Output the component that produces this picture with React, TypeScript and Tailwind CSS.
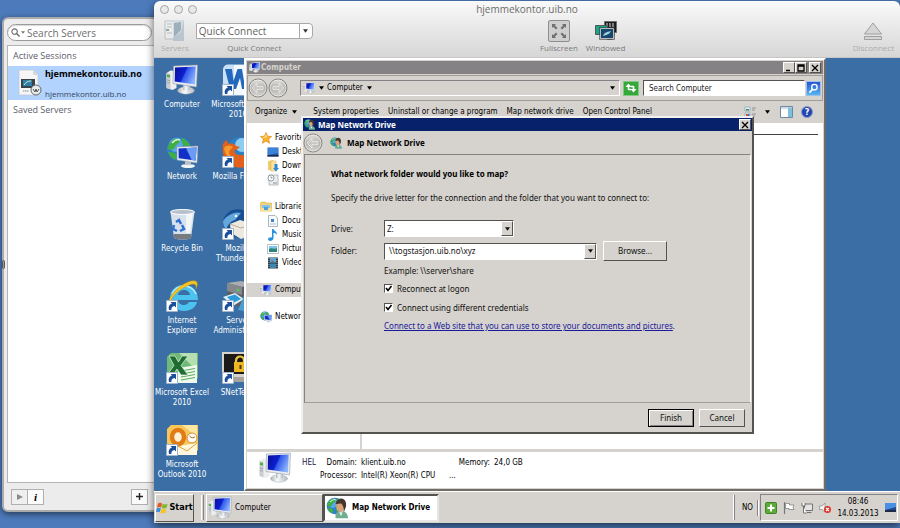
import { useState } from "react";
import type { ReactNode } from "react";

const RAISED = "border border-t-white border-l-white border-r-[#55534f] border-b-[#55534f] bg-[#d6d3ce]";
const SUNKEN = "border border-t-[#55534f] border-l-[#55534f] border-r-white border-b-white";
const MAC = "font-['Open_Sans','Noto_Sans',sans-serif]";
const TAHOMA = "font-['DejaVu_Sans_Condensed','DejaVu_Sans',sans-serif]";
const SEGOE = "font-['Noto_Sans','Open_Sans',sans-serif]";

function Caret({ className = "" }: { className?: string }) {
  return (
    <svg viewBox="0 0 6 4" className={`w-[5px] h-[4px] shrink-0 ${className}`} aria-hidden="true">
      <path d="M0 0h6L3 4z" fill="currentColor" />
    </svg>
  );
}

/* ---------- icons ---------- */

function PcIcon({ className = "w-8 h-8" }: { className?: string }) {
  return (
    <svg viewBox="0 0 32 32" className={`shrink-0 ${className}`} aria-hidden="true">
      <defs>
        <linearGradient id="pcScreen" x1="0" y1="0.2" x2="1" y2="0.6">
          <stop offset="0" stopColor="#0a12a0" />
          <stop offset="0.45" stopColor="#0d1fd0" />
          <stop offset="0.5" stopColor="#2f57ea" />
          <stop offset="1" stopColor="#8fb6ff" />
        </linearGradient>
        <linearGradient id="pcBase" x1="0" y1="0" x2="1" y2="0">
          <stop offset="0" stopColor="#aeb4ba" />
          <stop offset="0.4" stopColor="#fafbfc" />
          <stop offset="1" stopColor="#b4bac0" />
        </linearGradient>
      </defs>
      <path d="M0.500 9l4-2.500 6 .5v17l-4 2-6-2z" fill="#eceef0" />
      <path d="M0.500 9l4 .8V25.500l-4-1.500z" fill="#c9ced3" />
      <path d="M1 10.500l3 .6v2.400l-3-.6z" fill="#4fae3e" />
      <path d="M1 16l3 .6M1 18.500l3 .6" stroke="#8b9299" strokeWidth="0.7" />
      <ellipse cx="20" cy="26.500" rx="8.500" ry="3.700" fill="url(#pcBase)" stroke="#98a0a8" strokeWidth="0.4" />
      <path d="M17 19h7v7c-2 1-5 1-7 0z" fill="url(#pcBase)" />
      <path d="M7.500 2L31.500 1l-1 22L7 19.500z" fill="#e9edf1" stroke="#929ba4" strokeWidth="0.6" />
      <path d="M9 3.500L29.700 2.600 29 20.500 8.700 17.500z" fill="url(#pcScreen)" />
    </svg>
  );
}

function Globe() {
  return (
    <>
      <circle cx="13" cy="13" r="12" fill="#2f7fd0" />
      <circle cx="10" cy="9" r="7" fill="#6db9f0" opacity="0.7" />
      <path d="M3 8c3-5 7-6 9-5l2 3-4 3-2 4-4 1-3-1zM15 2c5 1 8 4 9 8l-4 1-3-2-1-3zM4 16l5 1 2 3-2 4c-4-2-6-5-7-8zM14 13l6-1 4 3c-1 5-4 7-7 9l-2-5z" fill="#3fae45" />
      <path d="M6 7c3-3 6-4 8-3" stroke="#d9f5d0" strokeWidth="1.500" fill="none" />
    </>
  );
}

function NetworkIcon({ className = "w-8 h-8" }: { className?: string }) {
  return (
    <svg viewBox="0 0 32 32" className={`shrink-0 ${className}`} aria-hidden="true">
      <Globe />
      <ellipse cx="22" cy="30" rx="7" ry="2" fill="#f0f3f6" />
      <path d="M19 25h6v4h-6z" fill="#bcc3ca" />
      <path d="M11 11l21-1-1 17-20-3z" fill="#e8ecf0" stroke="#929ba4" strokeWidth="0.5" />
      <path d="M12.500 12.500l18-.9-.8 13-17-2.400z" fill="#1230c8" />
      <path d="M20 12.200l10.500-.6-.8 13-4-.5z" fill="#6b9cf5" />
    </svg>
  );
}

function DriveUserIcon({ className = "w-6 h-6" }: { className?: string }) {
  return (
    <svg viewBox="0 0 32 32" className={`shrink-0 ${className}`} aria-hidden="true">
      <Globe />
      <path d="M14 31c0-3-1-5 1-8l5-2h6c4 1 6 5 6 10z" fill="#6fae90" />
      <path d="M19 22l3 6 2-6z" fill="#eef3ef" />
      <ellipse cx="20.500" cy="14" rx="5.500" ry="8" fill="#d9a27b" />
      <path d="M14 10c1-6 5-8 9-8 5 1 7 5 6 12l-3 8c-1-3 0-6-1-8-1-3-2-4-4-5-2 1-4 1-7 1z" fill="#47352c" />
    </svg>
  );
}

function ShortcutArrow() {
  return (
    <g>
      <path d="M0.500 20.500h11v11H0.500z" fill="#fff" stroke="#9db4cc" />
      <path d="M3 30c-1-4 1-6 3-6.500L4.500 22H10v5.500L8.500 26C6 26.500 5 28 5.500 30z" fill="#1c4f9c" />
    </g>
  );
}

function WordIcon() {
  return (
    <svg viewBox="0 0 32 32" className="w-8 h-8" aria-hidden="true">
      <rect x="1" y="0.500" width="31" height="31" rx="5" fill="#c9e0f7" />
      <path d="M12 1h18v30H12z" fill="#f4f9fe" />
      <path d="M3 5h7l1.500 12L15.500 5h4.500l2 12L25 5h6l-6 20h-5l-2-11-4 11H8z" fill="#2468bd" />
      <ShortcutArrow />
    </svg>
  );
}

function FirefoxIcon() {
  return (
    <svg viewBox="0 0 32 32" className="w-8 h-8" aria-hidden="true">
      <circle cx="18" cy="14" r="13" fill="#2e7fc4" />
      <circle cx="20" cy="9" r="7" fill="#8ecdf2" />
      <path d="M1 8l3-4 3 4c4-1 6 0 7 2l4 1-4 3c-2 0-2 1-1 3 3 3 8 3 11 0l4-2c-1 5 0 8 4 3v5c-3 8-12 10-19 8C5 29-1 21 1 8z" fill="#e2601c" />
      <path d="M2 12c2-3 6-3 9-1l-3 3c-2 3 0 7 5 8-5 1-10-2-11-10z" fill="#f59a2c" />
      <ShortcutArrow />
    </svg>
  );
}

function RecycleIcon() {
  return (
    <svg viewBox="0 0 32 32" className="w-8 h-8" aria-hidden="true">
      <path d="M4.500 4h24l-3.500 26c-3 2-14 2-17 0z" fill="#dfe6ee" opacity="0.95" />
      <path d="M7.500 26h18l-.5 4c-3 2-14 2-17 0z" fill="#777b80" />
      <path d="M20 5h7l-3 20h-4z" fill="#fff" opacity="0.7" />
      <ellipse cx="16.500" cy="4" rx="12" ry="2.500" fill="#b6c1cc" stroke="#fff" />
      <path d="M10 14l3-2 2 4M16 17l2 4-4 2M8 17l-1 4 4 2" stroke="#2d6fd2" strokeWidth="2.500" fill="none" />
    </svg>
  );
}

function ThunderbirdIcon() {
  return (
    <svg viewBox="0 0 32 32" className="w-8 h-8" aria-hidden="true">
      <path d="M1 13C3 4 12-1 21 2c7 2 11 8 11 15-1 9-8 14-16 13C6 28 1 22 1 13z" fill="#184f92" />
      <path d="M1 13c4-6 12-10 18-8l-6 7c-4 1-7 4-9 10-2-3-3-6-3-9z" fill="#63a8dd" />
      <path d="M8 16l10-4 13 4-4 12-8 3-10-6z" fill="#eee9e0" />
      <path d="M8 16l11 4 12-4" stroke="#b9ab94" fill="none" />
      <circle cx="14" cy="8" r="1.300" fill="#fff" />
      <ShortcutArrow />
    </svg>
  );
}

function ExplorerIcon() {
  return (
    <svg viewBox="0 0 32 32" className="w-8 h-8" aria-hidden="true">
      <path fillRule="evenodd" d="M18 5C9 5 4 11 4 18s6 13 14 13c7 0 12-4 13-9h-8c-1 2-3 3-5 3-3 0-6-2-6-5h20C32 11 27 5 18 5zm-6 10c0-3 3-5 6-5s6 2 6 5z" fill="#4cc3ee" />
      <path d="M6 14c2-5 7-8 12-8s10 3 12 8" stroke="#bdecfb" strokeWidth="1.500" fill="none" />
      <path d="M3 24C1 18 12 6 22 2c9-3 11 0 8 7 1-6-3-6-9-3C12 10 5 17 4 24z" fill="#f6c51f" stroke="#c99410" strokeWidth="0.5" />
      <ShortcutArrow />
    </svg>
  );
}

function ServerAdminIcon() {
  return (
    <svg viewBox="0 0 32 32" className="w-8 h-8" aria-hidden="true">
      <path d="M5 3l14-2 13 3v20l-12 4L5 22z" fill="#5b5e62" />
      <path d="M5 3l14-2 13 3-12 3z" fill="#a9adb2" />
      <path d="M5 3l15 4v8L5 11z" fill="#85898e" />
      <circle cx="16" cy="10" r="1.300" fill="#4fd34f" />
      <path d="M1 17l12-4 9 6-11 7z" fill="#dfeffa" />
      <path d="M5 17l8-2.500 6 4.500-8 4z" fill="#2c9bd8" />
      <path d="M16 30l6-14 4 2-4 13z" fill="#4a9fd0" />
      <ShortcutArrow />
    </svg>
  );
}

function ExcelIcon() {
  return (
    <svg viewBox="0 0 32 32" className="w-8 h-8" aria-hidden="true">
      <path d="M1 5l4-4h27v25l-5 5H1z" fill="#6fb978" />
      <path d="M13 1h18v18z" fill="#b5dfb1" />
      <path d="M12 16l19-3v18H12z" fill="#eef8ec" />
      <path d="M15 19l14-2.500M15 22l14-2.500M15 25l14-2.500M15 28l14-2.500" stroke="#5dac61" strokeWidth="1.200" />
      <path d="M3 4h6l3.500 6L16 4h6l-7 9.500 7 9.500h-7l-4-6-4 6H1l7-9.500z" fill="#1d6d33" stroke="#e2f2de" strokeWidth="0.7" />
      <ShortcutArrow />
    </svg>
  );
}

function SNetIcon() {
  return (
    <svg viewBox="0 0 32 32" className="w-8 h-8" aria-hidden="true">
      <path d="M0 0h32v25H0z" fill="#d5d4cf" />
      <path d="M2 2h29v20H2z" fill="#1b1a18" />
      <path d="M14 11V9c0-6 8-6 8 0v2" stroke="#f0c542" strokeWidth="2.200" fill="none" />
      <path d="M12 10h13v10H12z" fill="#eeb822" />
      <path d="M17.500 13h2v4h-2z" fill="#4f3a05" />
      <path d="M12 25h19v5H12z" fill="#a5a39c" />
      <ShortcutArrow />
    </svg>
  );
}

function OutlookIcon() {
  return (
    <svg viewBox="0 0 32 32" className="w-8 h-8" aria-hidden="true">
      <path d="M1 5l4-4h27v25l-5 5H1z" fill="#f6c85a" />
      <path d="M16 1h15v12z" fill="#fbe6a2" />
      <path d="M12 22l19-3v12H12z" fill="#fff8df" />
      <path d="M12 22l9 5 10-8" stroke="#dba03a" fill="none" />
      <ellipse cx="12" cy="13" rx="6" ry="7" fill="#fdf3d4" stroke="#e07b16" strokeWidth="4.500" />
      <circle cx="26" cy="14" r="5" fill="#fff" stroke="#d98a2b" />
      <path d="M23.500 12l2.500 2 3-1" stroke="#bb6a18" fill="none" />
      <ShortcutArrow />
    </svg>
  );
}

function StarIcon() {
  return (
    <svg viewBox="0 0 12 12" className="w-3 h-3 shrink-0" aria-hidden="true">
      <path d="M6 0.500l1.600 3.700 4 .3-3 2.600 1 4.200L6 9.100l-3.600 2.200 1-4.200-3-2.600 4-.3z" fill="#fbb224" stroke="#d97a12" strokeWidth="0.6" />
      <path d="M6 2l1 3-3 1-2-1h2.500z" fill="#ffe28a" />
    </svg>
  );
}

function DesktopIcon() {
  return (
    <svg viewBox="0 0 12 12" className="w-3 h-3 shrink-0" aria-hidden="true">
      <path d="M0.500 1.500h11v9H0.500z" fill="#2258ab" />
      <path d="M1 2h10v5L1 9z" fill="#3b83d8" />
      <path d="M0.500 9h11v1.500H0.500z" fill="#1c2c46" />
    </svg>
  );
}

function DownloadIcon() {
  return (
    <svg viewBox="0 0 12 12" className="w-3 h-3 shrink-0" aria-hidden="true">
      <path d="M1 1l5-1v11l-5-1z" fill="#f0cd6c" />
      <path d="M4 1h5v10H4z" fill="#f8e3a0" stroke="#d4ab48" strokeWidth="0.5" />
      <path d="M7.500 4h3v4H12l-3 3.500L6 8h1.500z" fill="#2d86d6" />
    </svg>
  );
}

function RecentIcon() {
  return (
    <svg viewBox="0 0 12 12" className="w-3 h-3 shrink-0" aria-hidden="true">
      <path d="M2 1h9v10H2z" fill="#e9edf0" stroke="#9aa5ae" strokeWidth="0.7" />
      <circle cx="4" cy="4" r="3" fill="#fff" stroke="#7c8993" strokeWidth="0.8" />
      <path d="M4 2.500V4h1.500M6 9h4" stroke="#6c7780" strokeWidth="0.8" fill="none" />
    </svg>
  );
}

function LibraryIcon() {
  return (
    <svg viewBox="0 0 12 12" className="w-3 h-3 shrink-0" aria-hidden="true">
      <path d="M0.500 2l1-1h4l1 1h5v8h-11z" fill="#f2d377" stroke="#c9a23f" strokeWidth="0.5" />
      <path d="M2 4h8v6H2z" fill="#7fc4ee" />
      <path d="M0.500 7h11v3.500h-11z" fill="#f7e29b" />
      <path d="M4 6h4v3H4z" fill="#4d9ddb" />
    </svg>
  );
}

function DocIcon() {
  return (
    <svg viewBox="0 0 12 12" className="w-3 h-3 shrink-0" aria-hidden="true">
      <path d="M1.500 0.500h6.500l2.500 2.500v8.500h-9z" fill="#f7fafc" stroke="#8c9aa6" strokeWidth="0.7" />
      <path d="M4 4h3v3H4z" fill="#4384c8" />
      <path d="M3 9h6" stroke="#9fb2c2" strokeWidth="0.8" />
    </svg>
  );
}

function MusicIcon() {
  return (
    <svg viewBox="0 0 12 12" className="w-3 h-3 shrink-0" aria-hidden="true">
      <path d="M5 0h1.500c.5 2 4 2.500 3.500 6-.5-1.500-2-2-3.500-2v5c0 3-5 4-5.500 1.500C1 8.500 3.500 8 5 8.500z" fill="#2a92dc" />
    </svg>
  );
}

function PictureIcon() {
  return (
    <svg viewBox="0 0 12 12" className="w-3 h-3 shrink-0" aria-hidden="true">
      <path d="M0.500 1.500h11v9h-11z" fill="#fff" stroke="#97a3ad" strokeWidth="0.7" />
      <path d="M2 3h8v3H2z" fill="#7cc6f0" />
      <path d="M2 6c3-2 5 1 8-1v4H2z" fill="#2b8678" />
    </svg>
  );
}

function VideoIcon() {
  return (
    <svg viewBox="0 0 12 12" className="w-3 h-3 shrink-0" aria-hidden="true">
      <path d="M1 0.500h10v11H1z" fill="#2c3c48" />
      <path d="M3 1h6v4.500H3z" fill="#5aa9d6" />
      <path d="M3 6.500h6V11H3z" fill="#3d86ad" />
      <path d="M2 1v10M10 1v10" stroke="#c9d3da" strokeWidth="0.8" strokeDasharray="1 1" />
      <path d="M4 3l3 1-2 1z" fill="#c5462e" />
    </svg>
  );
}

function RoundArrow({ flip = false }: { flip?: boolean }) {
  return (
    <svg viewBox="0 0 20 20" className={`w-5 h-5 shrink-0 ${flip ? "-scale-x-100" : ""}`} aria-hidden="true">
      <defs>
        <linearGradient id="roundBtn" x1="0" y1="0" x2="0" y2="1">
          <stop offset="0" stopColor="#e4e3e1" />
          <stop offset="0.5" stopColor="#b5b3b0" />
          <stop offset="1" stopColor="#d8d6d3" />
        </linearGradient>
      </defs>
      <circle cx="10" cy="10" r="9" fill="url(#roundBtn)" stroke="#82807c" />
      <circle cx="10" cy="10" r="8" fill="none" stroke="#f0efed" strokeWidth="0.6" />
      <path d="M9 5l-5 5 5 5v-3.500h6v-3H9z" fill="#cbc9c6" stroke="#ecebe9" strokeWidth="0.8" />
    </svg>
  );
}

function ServersIcon() {
  return (
    <svg viewBox="0 0 22 24" className="w-[22px] h-[24px] opacity-70" aria-hidden="true">
      <path d="M1 2h9v18H1z" fill="#eceeee" stroke="#9aa0a3" strokeWidth="0.8" />
      <path d="M3 5h5M3 8h5M3 14h5" stroke="#a5abae" />
      <path d="M2 10h3v2H2z" fill="#6f8b9c" />
      <path d="M9 1h11v21H9z" fill="#a9b9c5" />
      <path d="M9 1h11l-3 12-8 6z" fill="#c9d6de" />
      <path d="M10 4l7-1v8l-7 7z" fill="#5f7d93" opacity="0.7" />
    </svg>
  );
}

function FullscreenIcon() {
  return (
    <svg viewBox="0 0 22 22" className="w-[22px] h-[22px]" aria-hidden="true">
      <rect x="0.500" y="0.500" width="21" height="21" rx="1.500" fill="#cfcfcf" stroke="#8e8e8e" />
      <path d="M4 8V4h4L6.800 5.200 9.500 8 8 9.500 5.200 6.800zM18 8V4h-4l1.200 1.200L12.500 8 14 9.500l2.800-2.700zM4 14v4h4l-1.200-1.200L9.500 14 8 12.500l-2.800 2.700zM18 14v4h-4l1.200-1.200-2.700-2.800 1.500-1.500 2.800 2.700z" fill="#707070" />
    </svg>
  );
}

function WindowedIcon() {
  return (
    <svg viewBox="0 0 22 22" className="w-[22px] h-[22px]" aria-hidden="true">
      <path d="M9.500 1.500h12v11h-12z" fill="#1d1d1f" stroke="#6e6f71" />
      <path d="M12 3v4M15 3v4M18 3v4" stroke="#a8a8a8" strokeWidth="1.400" />
      <path d="M0.500 5.500h12v9h-12z" fill="#1ca486" stroke="#55565a" />
      <path d="M13 14l-1 6h5l3-6z" fill="#707274" />
      <path d="M5.500 8.500h13v10h-13z" fill="#17466f" stroke="#b9bbbd" />
      <path d="M4.500 7.500h15v12h-15z" fill="none" stroke="#3c3d3f" strokeWidth="0.6" />
      <path d="M8 16c1-3 3-4 8-5-1 2-3 4-8 5z" fill="#9fd1da" />
    </svg>
  );
}

function EjectIcon() {
  return (
    <svg viewBox="0 0 20 22" className="w-[20px] h-[22px]" aria-hidden="true">
      <path d="M10 3l8.500 11h-17zM1.500 16.500h17v3h-17z" fill="#d5d5d5" stroke="#9e9e9e" />
    </svg>
  );
}

function CordFileIcon() {
  return (
    <svg viewBox="0 0 24 28" className="w-6 h-7 shrink-0" aria-hidden="true">
      <path d="M1 1h14l5 5v20H1z" fill="#f6f6f6" stroke="#c4c6ca" strokeWidth="0.7" />
      <path d="M15 1l5 5h-5z" fill="#d9d9d9" />
      <path d="M3 10h14v9H3z" fill="#39434a" />
      <path d="M5 11h9v6H5z" fill="#2d7fa8" />
      <path d="M6 16c2-3 4-4 7-4" stroke="#d9e7b8" fill="none" />
      <path d="M5 22h6" stroke="#8a8a8a" strokeDasharray="1.500 0.500" />
      <circle cx="18" cy="21" r="5" fill="#e9eaeb" stroke="#66696c" />
      <path d="M15 20l2 3 1-3 1 3 2-3" stroke="#55585b" fill="none" />
    </svg>
  );
}

function WindowsFlag() {
  return (
    <svg viewBox="0 0 12 12" className="w-3 h-3 shrink-0" aria-hidden="true">
      <path d="M2 1.500c1.500-1 3-.8 4 0L5 5.500c-1-.8-2.500-.8-4 0z" fill="#e8561f" />
      <path d="M6.600 1.800c1.500.9 3 .9 5 0l-1 4c-1.500.9-3.500.9-5 0z" fill="#7db831" />
      <path d="M.8 6.300c1.500-.9 3-.9 4 0l-1 4c-1-.8-2.300-.8-4 0z" fill="#3a8ee0" />
      <path d="M5.400 6.700c1.500.9 3 .9 5 0l-1 4c-1.500.9-3.500.9-5 0z" fill="#f7c41d" />
    </svg>
  );
}

/* ---------- left: server drawer ---------- */

function ServerDrawer() {
  return (
    <aside className={`absolute left-[2px] top-[17px] bottom-4 w-[160px] flex flex-col bg-[#ececec] rounded-md border-2 border-[#a9abad] pl-[3px] pr-1 pt-[5px] shadow-[0_2px_6px_rgba(0,0,0,0.55)] text-[#5b6069] ${MAC}`}>
      <label className="flex items-center gap-px mr-1 h-[17px] w-[145px] rounded-full border border-[#9b9b9b] bg-white pl-[3px] shadow-[inset_0_1px_1px_rgba(0,0,0,0.15)]">
        <svg viewBox="0 0 10 10" className="w-[9px] h-[9px] shrink-0" aria-hidden="true">
          <circle cx="4" cy="4" r="3" fill="none" stroke="#6b6b6b" strokeWidth="1.200" />
          <path d="M6.200 6.200L9.500 9.500" stroke="#6b6b6b" strokeWidth="1.500" />
        </svg>
        <svg viewBox="0 0 6 4" className="w-[4px] h-[3px] shrink-0 text-[#777]" aria-hidden="true"><path d="M0 0h6L3 4z" fill="currentColor" /></svg>
        <input aria-label="Search servers" placeholder="Search Servers" className="min-w-0 flex-1 pl-px text-[10px] leading-4 placeholder:text-[#6d6d6d] outline-none" />
      </label>

      <div className="mt-[4px] flex-1 bg-white border border-[#b4b4b4] text-[9px] leading-[12px]">
        <h2 className="px-[5px] pt-[4px] pb-[4px]">Active Sessions</h2>
        <button className="w-full h-[34px] flex items-center gap-1 bg-[#b1d3fd] pl-[10px] text-left">
          <CordFileIcon />
          <span className="-ml-px flex flex-col pt-px gap-2">
            <strong className={`text-[9px] text-black ${SEGOE}`}>hjemmekontor.uib.no</strong>
            <span className="text-[8px] leading-[12px] text-[#38465c]">hjemmekontor.uib.no</span>
          </span>
        </button>
        <h2 className="px-[5px] pt-[4px]">Saved Servers</h2>
      </div>

      <div className="flex items-center justify-between h-[27px] pl-1 pr-2">
        <div className="flex">
          <button aria-label="Connect" className="w-[17px] h-[16px] grid place-items-center border border-[#b0b0b0] bg-[#efefef]">
            <svg viewBox="0 0 6 6" className="w-[6px] h-[6px]" aria-hidden="true"><path d="M0 0l6 3-6 3z" fill="#8b8b8b" /></svg>
          </button>
          <button aria-label="Info" className="w-[17px] h-[16px] -ml-px border border-[#b0b0b0] bg-[#fbfbfb] text-[11px] leading-[14px] text-black italic font-bold font-['Liberation_Serif',serif]">i</button>
        </div>
        <button aria-label="Add server" className="w-[17px] h-[16px] grid place-items-center border border-[#b0b0b0] bg-[#fbfbfb]">
          <svg viewBox="0 0 7 7" className="w-[7px] h-[7px]" aria-hidden="true"><path d="M3.500 0v7M0 3.500h7" stroke="#222" strokeWidth="1.400" /></svg>
        </button>
      </div>
    </aside>
  );
}

/* ---------- mac toolbar ---------- */

function Tool({ icon, label, muted = false }: { icon: ReactNode; label: string; muted?: boolean }) {
  return (
    <button className={`flex flex-col items-center ${muted ? "text-[#acacac]" : "text-[#7b7b7b]"}`}>
      <span className="h-6 grid place-items-center">{icon}</span>
      <span className="text-[8px] leading-[10px]">{label}</span>
    </button>
  );
}

function MacToolbar() {
  return (
    <header className={`h-[57px] shrink-0 flex flex-col bg-linear-to-b from-[#fafafa] to-[#d6d6d6] border-b border-[#c6c6c6] ${MAC}`}>
      <div className="grid grid-cols-[1fr_auto_1fr] items-center h-[16px] px-[6px]">
        <div className="flex gap-[5px]">
          {["Close", "Minimize", "Zoom"].map((name) => (
            <button key={name} aria-label={name} className="w-[9px] h-[9px] rounded-full border border-[#a3a3a3] bg-[#e9e9e9]" />
          ))}
        </div>
        <h1 className="text-[10px] leading-[16px] text-[#6c6c6c]">hjemmekontor.uib.no</h1>
      </div>
      <div className="flex items-start pl-[7px] pr-[6px] pt-[2px]">
        <Tool icon={<ServersIcon />} label="Servers" muted />
        <div className="flex flex-col items-center ml-[7px]">
          <div className="h-6 flex items-center">
            <div className="flex w-[117px] h-4 border border-[#a8a8a8] rounded-r bg-white">
              <input aria-label="Quick Connect" defaultValue="Quick Connect" className="min-w-0 flex-1 pl-[2px] text-[10px] text-[#5f5f5f] outline-none" />
              <button aria-label="Show servers" className="w-[13px] grid place-items-center border-l border-[#a8a8a8] text-[#333]"><Caret /></button>
            </div>
          </div>
          <span className="text-[8px] leading-[10px] text-[#7b7b7b]">Quick Connect</span>
        </div>
        <div className="flex-[225]" />
        <div className="flex gap-2">
          <Tool icon={<FullscreenIcon />} label="Fullscreen" />
          <Tool icon={<WindowedIcon />} label="Windowed" />
        </div>
        <div className="flex-[225]" />
        <Tool icon={<EjectIcon />} label="Disconnect" muted />
      </div>
    </header>
  );
}

/* ---------- desktop shortcuts ---------- */

const SHORTCUTS: { label: string; icon: ReactNode }[][] = [
  [
    { label: "Computer", icon: <PcIcon /> },
    { label: "Network", icon: <NetworkIcon /> },
    { label: "Recycle Bin", icon: <RecycleIcon /> },
    { label: "Internet Explorer", icon: <ExplorerIcon /> },
    { label: "Microsoft Excel 2010", icon: <ExcelIcon /> },
    { label: "Microsoft Outlook 2010", icon: <OutlookIcon /> },
  ],
  [
    { label: "Microsoft Word 2010", icon: <WordIcon /> },
    { label: "Mozilla Firefox", icon: <FirefoxIcon /> },
    { label: "Mozilla Thunderbird", icon: <ThunderbirdIcon /> },
    { label: "Server Administrator", icon: <ServerAdminIcon /> },
    { label: "SNetTerm", icon: <SNetIcon /> },
  ],
];

function Shortcuts() {
  return (
    <div className="flex h-full pt-[6px]">
      {SHORTCUTS.map((column, i) => (
        <ul key={i} className="w-[56px] shrink-0">
          {column.map(({ label, icon }) => (
            <li key={label} className="h-[72px] flex justify-center">
              <button className="w-[60px] shrink-0 flex flex-col items-center gap-[4px] text-[8px] leading-[10px] text-white text-center">
                <span className="w-8 h-8">{icon}</span>
                {label}
              </button>
            </li>
          ))}
        </ul>
      ))}
    </div>
  );
}

/* ---------- explorer window ---------- */

const GROUPS: { label: string; icon: ReactNode; children: { label: string; icon: ReactNode }[] }[] = [
  {
    label: "Favorites",
    icon: <StarIcon />,
    children: [
      { label: "Desktop", icon: <DesktopIcon /> },
      { label: "Downloads", icon: <DownloadIcon /> },
      { label: "Recent Places", icon: <RecentIcon /> },
    ],
  },
  {
    label: "Libraries",
    icon: <LibraryIcon />,
    children: [
      { label: "Documents", icon: <DocIcon /> },
      { label: "Music", icon: <MusicIcon /> },
      { label: "Pictures", icon: <PictureIcon /> },
      { label: "Videos", icon: <VideoIcon /> },
    ],
  },
  { label: "Computer", icon: <PcIcon className="w-3 h-3" />, children: [] },
  { label: "Network", icon: <NetworkIcon className="w-3 h-3" />, children: [] },
];

function CaptionButton({ label, path }: { label: string; path: string }) {
  return (
    <button type="button" aria-label={label} className={`w-3 h-[11px] grid place-items-center ${RAISED}`}>
      <svg viewBox="0 0 8 8" className="w-2 h-2" aria-hidden="true">
        <path d={path} stroke="#000" strokeWidth="1.300" fill="none" />
      </svg>
    </button>
  );
}

function ExplorerWindow() {
  return (
    <section className="absolute left-[90px] right-[74px] top-0 bottom-0 flex flex-col bg-[#d6d3ce] border-2 border-t-white border-l-white border-r-[#6f6d69] border-b-[#6f6d69] p-px">
      <div className="h-[13px] shrink-0 flex items-center bg-[#848284] px-[2px] text-[8px] font-bold text-[#d6d3ce]">
        <PcIcon className="w-[11px] h-[11px]" />
        <span className="ml-px flex-1">Computer</span>
        <div className="flex">
          <CaptionButton label="Minimize" path="M1 6.500h4" />
          <CaptionButton label="Maximize" path="M1 1h6v6H1zM1 2h6" />
          <span className="w-[2px]" />
          <CaptionButton label="Close" path="M1 1l6 6M7 1L1 7" />
        </div>
      </div>

      <div className="mt-px h-[26px] shrink-0 flex items-center border border-[#a09e9a] pr-px text-[8px]">
        <button aria-label="Back"><RoundArrow /></button>
        <button aria-label="Forward"><RoundArrow flip /></button>
        <div className="ml-3 flex-1 h-4 flex items-center gap-1 px-1 border border-t-[#848284] border-l-[#848284] border-r-white border-b-white">
          <PcIcon className="w-3 h-3 -ml-[2px]" />
          <Caret />
          <span className="-ml-px">Computer</span>
          <Caret />
          <span className="flex-1" />
          <Caret />
        </div>
        <button aria-label="Refresh" className="ml-[3px] w-4 h-[15px] grid place-items-center bg-[#35a83a] border border-[#7fc983]">
          <svg viewBox="0 0 12 12" className="w-3 h-3" aria-hidden="true">
            <path d="M3.500 8V4M8.500 4v4" fill="none" stroke="#fff" strokeWidth="1.600" />
            <path d="M3.500 7.500H6M8.500 4.500H6" fill="none" stroke="#fff" strokeWidth="1.400" />
            <path d="M0.500 5l3-3.500 3 3.500zM11.500 7l-3 3.500-3-3.500z" fill="#fff" />
          </svg>
        </button>
        <input aria-label="Search Computer" placeholder="Search Computer" className={`ml-1 w-[162px] h-4 bg-white px-[5px] text-[8px] placeholder:text-[#222] outline-none ${SUNKEN}`} />
        <button aria-label="Search" className="w-[15px] h-[15px] ml-px grid place-items-center bg-linear-to-b from-[#2c52cf] to-[#58b5ee] border border-[#9cc0ea]">
          <svg viewBox="0 0 12 12" className="w-[11px] h-[11px]" aria-hidden="true">
            <circle cx="7" cy="4.500" r="3" fill="none" stroke="#fff" strokeWidth="1.500" />
            <path d="M5 7L1.500 10.500" stroke="#fff" strokeWidth="2" />
          </svg>
        </button>
      </div>

      <div className="h-[22px] shrink-0 flex items-center pl-2 pr-[10px] text-[8px] leading-3 whitespace-nowrap">
        <button className="flex items-center gap-[5px]">Organize <Caret /></button>
        <button className="ml-4">System properties</button>
        <button className="ml-[9px]">Uninstall or change a program</button>
        <button className="ml-[9px]">Map network drive</button>
        <button className="ml-[9px]">Open Control Panel</button>
        <span className="flex-1" />
        <button aria-label="Change your view" className="flex items-center gap-[9px]">
          <svg viewBox="0 0 12 12" className="w-3 h-3" aria-hidden="true">
            <path d="M1 1h5v4H1zM1 7h5v4H1z" fill="#e8f1f8" stroke="#7796ad" strokeWidth="0.600" />
            <path d="M2 3h3v1.500H2z" fill="#3a8f5c" />
            <path d="M2 8h2v2H2z" fill="#d0542f" />
            <path d="M4 8h1.500v2H4z" fill="#3672c4" />
            <path d="M8 2h4M8 4h3M8 8h4M8 10h3" stroke="#7c8792" strokeWidth="0.800" />
          </svg>
          <Caret />
        </button>
        <button aria-label="Show the preview pane" className="ml-[10px]">
          <svg viewBox="0 0 13 12" className="w-[13px] h-3" aria-hidden="true">
            <path d="M0.500 0.500h12v11h-12z" fill="#fff" stroke="#6b8aa5" />
            <path d="M8 1.500h4v9.500H8z" fill="#7cc0dc" />
            <path d="M1 2h11" stroke="#a3bdd2" />
          </svg>
        </button>
        <button aria-label="Get help" className="ml-2 w-3 h-3 rounded-full bg-[#2345b2] border border-[#8c9cc9] text-white text-[9px] leading-[10px] font-bold">?</button>
      </div>

      <div className="flex-1 min-h-0 flex bg-white">
        <nav className="w-[115px] shrink-0 border-r-2 border-[#d6d3ce] pt-[8px] flex flex-col gap-[13px] text-[8px]">
          {GROUPS.map((group) => (
            <div key={group.label}>
              <button className={`w-full h-[14px] flex items-center gap-[3px] pl-[13px] ${group.label === "Computer" ? "bg-[#d6d3ce]" : ""}`}>
                {group.icon}
                {group.label}
              </button>
              {group.children.map((item) => (
                <button key={item.label} className="w-full h-[14px] flex items-center gap-[3px] pl-5">
                  {item.icon}
                  {item.label}
                </button>
              ))}
            </div>
          ))}
        </nav>
        <div className="flex-1 pr-[5px] pt-[11px]">
          <div className="border-t border-[#444]" />
        </div>
      </div>

      <footer className="h-[39px] shrink-0 flex bg-white border-t-[3px] border-[#d6d3ce] pl-3 text-[8px] leading-[13px]">
        <PcIcon className="w-8 h-8" />
        <span className="ml-[11px] pt-1 text-[#1a1a4a]">HEL</span>
        <dl className="ml-1 pt-1 grid grid-cols-[37px_84px_41px_60px] gap-x-1 content-start whitespace-nowrap">
          <dt className="text-right">Domain:</dt>
          <dd>klient.uib.no</dd>
          <dt className="text-right">Memory:</dt>
          <dd>24,0 GB</dd>
          <dt className="flex justify-end">Processor:</dt>
          <dd>Intel(R) Xeon(R) CPU</dd>
          <dd>...</dd>
        </dl>
      </footer>
    </section>
  );
}

/* ---------- map network drive dialog ---------- */

function Check({ label, checked, onChange }: { label: string; checked: boolean; onChange: (v: boolean) => void }) {
  return (
    <label className="flex items-center gap-1 h-[19px]">
      <span className="grid">
        <input
          type="checkbox"
          checked={checked}
          onChange={(e) => onChange(e.target.checked)}
          className={`peer col-start-1 row-start-1 appearance-none w-[9px] h-[9px] bg-white ${SUNKEN}`}
        />
        <svg viewBox="0 0 9 9" className="col-start-1 row-start-1 w-[9px] h-[9px] pointer-events-none invisible peer-checked:visible" aria-hidden="true">
          <path d="M2 4l2 2.500L7.500 2" stroke="#000" strokeWidth="1.600" fill="none" />
        </svg>
      </span>
      {label}
    </label>
  );
}

function MapDriveDialog() {
  const [drive, setDrive] = useState("Z:");
  const [folder, setFolder] = useState("\\\\togstasjon.uib.no\\xyz");
  const [reconnect, setReconnect] = useState(true);
  const [otherUser, setOtherUser] = useState(true);

  return (
    <form
      onSubmit={(e) => e.preventDefault()}
      className={`absolute left-[147px] top-[58px] w-[453px] flex flex-col bg-[#d6d3ce] border-2 border-t-[#f2f1ef] border-l-[#f2f1ef] border-r-[#55534f] border-b-[#55534f] text-[8px] leading-3 text-[#111] ${SEGOE}`}
    >
      <div className="h-[13px] flex items-center bg-[#08216b] pl-px pr-px text-white font-bold">
        <DriveUserIcon className="w-[11px] h-[11px]" />
        <h2 className="ml-[3px] flex-1">Map Network Drive</h2>
        <CaptionButton label="Close" path="M1 1l6 6M7 1L1 7" />
      </div>
      <div className="h-[23px] flex items-center">
        <button type="button" aria-label="Back"><RoundArrow /></button>
        <DriveUserIcon className="w-3 h-3 ml-[7px]" />
        <strong className="ml-[5px] text-black">Map Network Drive</strong>
      </div>

      <div className="mx-px h-[249px] border border-[#848284] border-r-white border-b-[#a09e9a] pl-[26px] pt-[13px]">
        <h3 className="font-bold text-black">What network folder would you like to map?</h3>
        <p className="mt-3">Specify the drive letter for the connection and the folder that you want to connect to:</p>

        <div className="mt-4 grid grid-cols-[53px_1fr] items-center gap-y-1">
          <label htmlFor="drive" className="pt-px">Drive:</label>
          <div className={`w-[130px] h-[17px] flex bg-white ${SUNKEN}`}>
            <select
              id="drive"
              value={drive}
              onChange={(e) => setDrive(e.target.value)}
              className="flex-1 appearance-none pl-[2px] outline-none"
            >
              <option>Z:</option>
              <option>Y:</option>
              <option>X:</option>
            </select>
            <span className={`w-3 grid place-items-center pointer-events-none ${RAISED}`}><Caret /></span>
          </div>
          <label htmlFor="folder">Folder:</label>
          <div className="flex items-center gap-[6px] h-5">
            <div className={`w-[213px] h-[17px] flex bg-white ${SUNKEN}`}>
              <input
                id="folder"
                value={folder}
                onChange={(e) => setFolder(e.target.value)}
                className="min-w-0 flex-1 pl-1 outline-none"
              />
              <button type="button" aria-label="Show recent folders" className={`w-3 grid place-items-center ${RAISED}`}>
                <Caret />
              </button>
            </div>
            <button type="button" className={`w-16 h-5 ${RAISED}`}>Browse...</button>
          </div>

          <div className="col-start-2">
            <p className="pb-[2px]">Example: \\server\share</p>
            <Check label="Reconnect at logon" checked={reconnect} onChange={setReconnect} />
            <Check label="Connect using different credentials" checked={otherUser} onChange={setOtherUser} />
            <p className="pt-[3px]">
              <a href="#web" className="text-[#1a1a9c] underline">Connect to a Web site that you can use to store your documents and pictures</a>.
            </p>
          </div>
        </div>
      </div>

      <div className="h-[29px] flex items-center justify-end gap-[5px] pr-[7px]">
        <button type="submit" className="w-[46px] h-[18px] border border-black bg-[#d6d3ce] shadow-[inset_1px_1px_0_#fff,inset_-1px_-1px_0_#848284]">Finish</button>
        <button type="button" className={`w-[46px] h-[18px] ${RAISED}`}>Cancel</button>
      </div>
    </form>
  );
}

/* ---------- taskbar ---------- */

function Taskbar() {
  return (
    <footer className="h-8 shrink-0 flex items-center bg-[#d6d3ce] border-t border-white pl-px pr-[2px] text-[8px] text-black">
      <button className={`w-[39px] h-7 flex items-center justify-center gap-px font-bold text-[9px] ${RAISED}`}>
        <WindowsFlag />
        Start
      </button>
      <span className="ml-[7px] w-[3px] h-[25px] border-l border-white border-r border-r-[#848284]" />
      <button className={`ml-[2px] w-[117px] h-7 flex items-center gap-[3px] pl-px ${RAISED}`}>
        <PcIcon className="w-6 h-6" />
        Computer
      </button>
      <button className="w-[116px] h-7 flex items-center gap-1 pl-px bg-white border-2 border-t-[#55534f] border-l-[#55534f] border-r-[#e8e6e3] border-b-[#e8e6e3] font-bold whitespace-nowrap">
        <DriveUserIcon className="w-[22px] h-[22px]" />
        Map Network Drive
      </button>
      <span className="flex-1" />
      <span className="w-[2px] h-[25px] border-l border-white border-r border-r-[#848284]" />
      <button className="w-[22px] pl-[3px] text-center">NO</button>
      <span className="w-[2px] h-4 border-l border-[#848284] border-r border-r-white" />
      <div className="ml-px h-[27px] flex items-center gap-[6px] pl-1 pr-px border border-t-[#848284] border-l-[#848284] border-r-white border-b-white">
        <svg viewBox="0 0 12 12" className="w-3 h-3" aria-hidden="true">
          <rect x="0.500" y="0.500" width="11" height="11" rx="1" fill="#5cab3a" stroke="#3f8526" />
          <path d="M5 2.500h2V5h2.500v2H7v2.500H5V7H2.500V5H5z" fill="#fff" />
        </svg>
        <svg viewBox="0 0 12 12" className="w-3 h-3" aria-hidden="true">
          <path d="M1.500 0v12" stroke="#777" strokeWidth="1.200" />
          <path d="M2.500 1.500h4v1.500h4.500l-1 2.500 1 2H6V6.500H2.500z" fill="#fff" stroke="#777" strokeWidth="0.700" />
        </svg>
        <svg viewBox="0 0 12 12" className="w-3 h-3" aria-hidden="true">
          <path d="M3.500 2h8v6.500h-8zM5.500 10.500h5" fill="#e4e4e4" stroke="#666" strokeWidth="0.900" />
          <path d="M1 1v3h3V1M2.500 4v7h3" fill="#fff" stroke="#666" strokeWidth="0.900" />
        </svg>
        <svg viewBox="0 0 12 12" className="w-3 h-3" aria-hidden="true">
          <path d="M0.500 4h2.500l3-3v9L3 7.500H.5z" fill="#f4f4f4" stroke="#888" strokeWidth="0.700" />
          <circle cx="8.500" cy="7.500" r="3.500" fill="#dd3226" />
          <path d="M7 6l3 3M10 6l-3 3" stroke="#fff" strokeWidth="1.200" />
        </svg>
        <time className="w-[42px] pt-px text-center leading-[12px]">
          08:46
          <br />
          14.03.2013
        </time>
        <svg viewBox="0 0 11 9" className="w-[11px] h-[9px]" aria-hidden="true">
          <path d="M0 0h11v9H0z" fill="#20488f" />
          <path d="M0 0h11v4L0 7z" fill="#4b8fe2" />
          <path d="M0 7h11v2H0z" fill="#1c2b48" />
        </svg>
      </div>
    </footer>
  );
}

export default function App() {
  return (
    <main className="relative h-screen overflow-hidden bg-[#4c7abb]">
      <ServerDrawer />
      <div className="absolute left-[154px] right-0 top-px bottom-[5px] flex flex-col rounded-t-md overflow-hidden bg-[#3a6ea5] shadow-[0_3px_8px_rgba(0,0,0,0.6)]">
        <MacToolbar />
        <div className={`relative flex-1 min-h-0 text-black ${TAHOMA}`}>
          <Shortcuts />
          <ExplorerWindow />
          <MapDriveDialog />
        </div>
        <div className={TAHOMA}>
          <Taskbar />
        </div>
      </div>
      <span className="absolute left-[2px] top-[260px] w-[3px] h-[9px] rounded border border-[#555] bg-[#999]" />
    </main>
  );
}
